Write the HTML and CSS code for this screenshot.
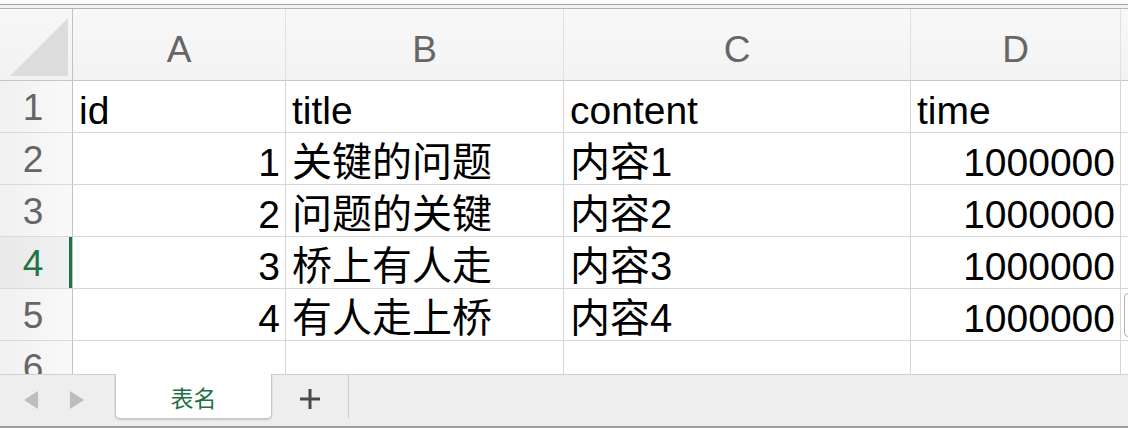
FILE: index.html
```html
<!DOCTYPE html>
<html lang="zh">
<head>
<meta charset="utf-8">
<title>表名</title>
<link rel="stylesheet" href="styles.css">
</head>
<body>
<div class="app">
  <div class="top-strip"></div>
  <div class="sheet">
    <div class="corner"><svg width="72" height="71" viewBox="0 0 72 71"><polygon points="10,67 68,67 68,9" fill="#dcdcdc"/></svg></div>
    <div class="colhead">A</div>
    <div class="colhead">B</div>
    <div class="colhead">C</div>
    <div class="colhead">D</div>
    <div class="colhead last"></div>

    <div class="rowhead">1</div>
    <div class="cell">id</div>
    <div class="cell">title</div>
    <div class="cell">content</div>
    <div class="cell">time</div>
    <div class="cell last"></div>

    <div class="rowhead">2</div>
    <div class="cell num">1</div>
    <div class="cell cjk">关键的问题</div>
    <div class="cell cjk">内容1</div>
    <div class="cell num">1000000</div>
    <div class="cell last"></div>

    <div class="rowhead">3</div>
    <div class="cell num">2</div>
    <div class="cell cjk">问题的关键</div>
    <div class="cell cjk">内容2</div>
    <div class="cell num">1000000</div>
    <div class="cell last"></div>

    <div class="rowhead selected">4</div>
    <div class="cell num">3</div>
    <div class="cell cjk">桥上有人走</div>
    <div class="cell cjk">内容3</div>
    <div class="cell num">1000000</div>
    <div class="cell last"></div>

    <div class="rowhead">5</div>
    <div class="cell num">4</div>
    <div class="cell cjk">有人走上桥</div>
    <div class="cell cjk">内容4</div>
    <div class="cell num">1000000</div>
    <div class="cell last"><span class="paste-tag"></span></div>

    <div class="rowhead partial">6</div>
    <div class="cell partial"></div>
    <div class="cell partial"></div>
    <div class="cell partial"></div>
    <div class="cell partial"></div>
    <div class="cell partial last"></div>
  </div>
  <div class="tabbar">
    <div class="nav">
      <span class="arrow arrow-left"></span>
      <span class="arrow arrow-right"></span>
    </div>
    <div class="tab">表名</div>
    <div class="add">
      <svg width="20" height="20" viewBox="0 0 20 20"><path d="M10 0V20M0 10H20" stroke="#4a4a4a" stroke-width="3"/></svg>
    </div>
    <div class="rest"></div>
  </div>
</div>
</body>
</html>
```

FILE: styles.css
```css
html, body {
  margin: 0;
  padding: 0;
  background: #ffffff;
}
body {
  width: 1128px;
  height: 428px;
  overflow: hidden;
  font-family: "Liberation Sans", "Noto Sans CJK SC", sans-serif;
}
.app {
  display: flex;
  flex-direction: column;
  width: 1128px;
  height: 428px;
}
.top-strip {
  height: 9px;
  box-sizing: border-box;
  border-top: 4px solid #fbfbfb;
  background: linear-gradient(to bottom, #a3a3a3 0, #a3a3a3 1px, #f4f4f4 1px, #f4f4f4 4px, #b3b3b3 4px, #b3b3b3 5px);
}
.sheet {
  display: grid;
  grid-template-columns: 73px 213px 278px 347px 210px 1fr;
  grid-template-rows: 72px 52px 52px 52px 52px 52px 33px;
  height: 365px;
  overflow: hidden;
}
.sheet > div {
  box-sizing: border-box;
  border-right: 1px solid #d6d6d6;
  border-bottom: 1px solid #d6d6d6;
  overflow: hidden;
  position: relative;
}
.sheet > .last {
  border-right: none;
}
.sheet > .partial {
  border-bottom: none;
}
.corner {
  background: linear-gradient(to bottom, #f7f7f7, #f2f2f2);
  border-right-color: #c2c2c2 !important;
  border-bottom-color: #c6c6c6 !important;
}
.corner svg {
  display: block;
}
.colhead {
  background: linear-gradient(to bottom, #f8f8f8, #f3f3f3);
  border-bottom-color: #c6c6c6 !important;
  border-right-color: #e0e0e0 !important;
  color: #666666;
  font-size: 37px;
  line-height: 37px;
  display: flex;
  align-items: center;
  justify-content: center;
  padding-top: 10px;
}
.rowhead {
  background: linear-gradient(to right, #f1f1f1, #f9f9f9);
  border-right-color: #c2c2c2 !important;
  border-bottom-color: #dadada !important;
  color: #666666;
  font-size: 37px;
  line-height: 37px;
  display: flex;
  align-items: flex-start;
  justify-content: center;
  padding-top: 8px;
  padding-right: 6px;
}
.rowhead.selected {
  color: #217346;
  background: linear-gradient(to right, #e9e9e9, #f1f1f1);
}
.rowhead.selected::after {
  content: "";
  position: absolute;
  right: 0;
  top: 0;
  bottom: -1px;
  width: 3px;
  background: #217346;
}
.cell {
  background: #ffffff;
  color: #000000;
  font-size: 39px;
  line-height: 39px;
  display: flex;
  align-items: flex-end;
  justify-content: flex-start;
  padding: 0 5px 2px 6px;
  white-space: nowrap;
}
.cell.cjk {
  font-size: 40px;
  line-height: 39px;
}
.cell.num {
  justify-content: flex-end;
}
.paste-tag {
  position: absolute;
  left: 3px;
  top: 4px;
  width: 14px;
  height: 44px;
  box-sizing: border-box;
  border: 1px solid #b0b0b0;
  border-radius: 4px;
  background: #ffffff;
}
.tabbar {
  flex: 1;
  display: flex;
  box-sizing: border-box;
  border-top: 1px solid #d0d0d0;
  border-bottom: 2px solid #9d9d9d;
  background: #eeeeee;
}
.nav {
  width: 115px;
  display: flex;
  align-items: center;
  padding-left: 24px;
  box-sizing: border-box;
  gap: 32px;
  padding-bottom: 2px;
}
.arrow {
  width: 0;
  height: 0;
  border-top: 9px solid transparent;
  border-bottom: 9px solid transparent;
}
.arrow-left {
  border-right: 14px solid #bdbdbd;
}
.arrow-right {
  border-left: 14px solid #bdbdbd;
}
.tab {
  width: 157px;
  height: 45px;
  margin-top: -1px;
  box-sizing: border-box;
  background: #ffffff;
  border: 1px solid #c4c4c4;
  border-top: none;
  border-radius: 0 0 5px 5px;
  box-shadow: 0 1px 2px rgba(0, 0, 0, 0.18);
  color: #1d7044;
  font-size: 23px;
  display: flex;
  align-items: center;
  justify-content: center;
  padding-top: 2px;
  position: relative;
  z-index: 1;
}
.add {
  width: 77px;
  height: 43px;
  box-sizing: border-box;
  border-right: 1px solid #c8c8c8;
  display: flex;
  align-items: center;
  justify-content: center;
  padding-top: 4px;
}
.add svg {
  display: block;
}
.rest {
  flex: 1;
}
```
